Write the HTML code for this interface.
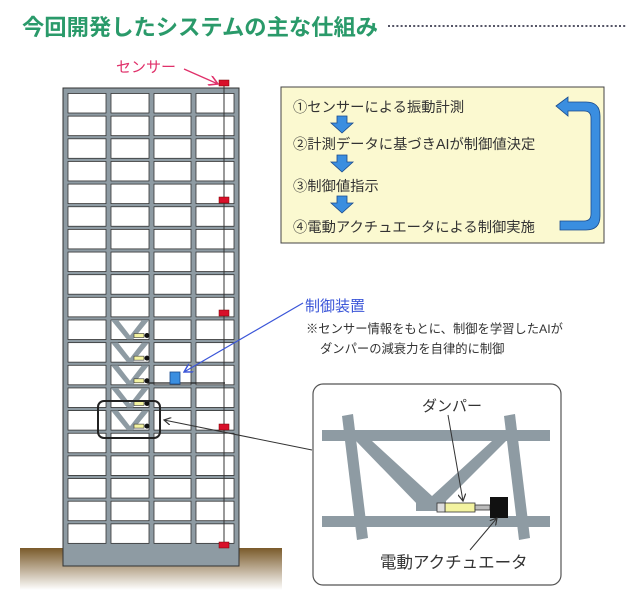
<!DOCTYPE html>
<html><head><meta charset="utf-8"><style>
body{margin:0;background:#fff;width:640px;height:603px;overflow:hidden;font-family:"Liberation Sans","Noto Sans CJK JP",sans-serif}
svg{position:absolute;left:0;top:0}
</style></head><body>
<svg width="640" height="603" viewBox="0 0 640 603" xmlns="http://www.w3.org/2000/svg" font-family="Liberation Sans, Noto Sans CJK JP, sans-serif">
<defs>
<linearGradient id="g" x1="0" y1="0" x2="0" y2="1"><stop offset="0" stop-color="#7a5a2a"/><stop offset="1" stop-color="#fff"/></linearGradient>
<marker id="ab" markerWidth="8" markerHeight="8" refX="7" refY="4" orient="auto"><path d="M0,0 L7,4 L0,8" fill="none" stroke="#3a55d8" stroke-width="1.2"/></marker>
<marker id="ak" markerWidth="8" markerHeight="8" refX="7" refY="4" orient="auto"><path d="M0,0 L7,4 L0,8" fill="none" stroke="#333" stroke-width="1.2"/></marker>
<marker id="ap" markerWidth="8" markerHeight="8" refX="7" refY="4" orient="auto"><path d="M0,0 L7,4 L0,8" fill="none" stroke="#e0306a" stroke-width="1.2"/></marker>
</defs>
<text x="22" y="35" font-size="22.3" font-weight="bold" fill="#2a9a6a">今回開発したシステムの主な仕組み</text>
<line x1="388" y1="26" x2="627" y2="26" stroke="#556" stroke-width="2" stroke-dasharray="2,2.2"/>
<rect x="20" y="548" width="262" height="42" fill="url(#g)"/>
<rect x="63" y="88" width="176" height="478" fill="#8e9ba3" stroke="#333" stroke-width="1"/>
<g fill="#fff" stroke="#333" stroke-width="0.8" id="cells"></g>
<text x="116" y="72" font-size="15" fill="#e0306a">センサー</text>
<line x1="184" y1="69" x2="218" y2="84" stroke="#e0306a" stroke-width="1.3" marker-end="url(#ap)"/>
<rect x="281" y="87" width="323" height="156" fill="#fbf9d0" stroke="#444" stroke-width="1"/>
<g font-size="14.3" fill="#333">
<text x="293" y="112">①センサーによる振動計測</text>
<text x="293" y="149">②計測データに基づきAIが制御値決定</text>
<text x="293" y="191">③制御値指示</text>
<text x="293" y="232">④電動アクチュエータによる制御実施</text>
</g>
<g fill="#3a8ee0" stroke="#1a4a8a" stroke-width="0.8">
<path d="M337,116 h10 v7 h6 l-11,10 l-11,-10 h6z"/>
<path d="M337,155 h10 v7 h6 l-11,10 l-11,-10 h6z"/>
<path d="M337,196 h10 v7 h6 l-11,10 l-11,-10 h6z"/>
<path d="M556,106 l12,-9 v5 h18 q14,0 14,14 v100 q0,14 -14,14 h-26 v-9 h24 q7,0 7,-7 v-96 q0,-7 -7,-7 h-16 v5z"/>
</g>
<text x="305" y="311" font-size="15" fill="#3a55d8">制御装置</text>
<line x1="303" y1="303" x2="184" y2="372" stroke="#3a55d8" stroke-width="1.2" marker-end="url(#ab)"/>
<text x="306" y="333" font-size="12.3" fill="#333">※センサー情報をもとに、制御を学習したAIが</text>
<text x="320" y="353" font-size="12.3" fill="#333">ダンパーの減衰力を自律的に制御</text>
<line x1="147" y1="383" x2="225" y2="383" stroke="#222" stroke-width="1.2"/>
<rect x="170" y="372" width="10" height="12" fill="#3a8ee0" stroke="#1a4a8a" stroke-width="0.8"/>
<rect x="98" y="401" width="62" height="37" rx="6" fill="none" stroke="#222" stroke-width="2"/>
<line x1="312" y1="450" x2="164" y2="420" stroke="#333" stroke-width="1" marker-end="url(#ak)"/>
<rect x="313" y="384" width="248" height="201" rx="10" fill="#fff" stroke="#555" stroke-width="1.2"/>
<g fill="#8e9ba3">
<rect x="322" y="430" width="228" height="11"/>
<rect x="322" y="516" width="228" height="11"/>
<polygon points="342,416 353,414 368,538 357,540"/>
<polygon points="504,416 515,414 530,538 519,540"/>
<polygon points="356,441 372,441 432,496 492,441 506,441 440,507 420,507"/>
<rect x="416" y="496" width="30" height="15"/>
</g>
<rect x="445" y="503" width="30" height="9" fill="#f3f3a0" stroke="#333" stroke-width="0.8"/>
<rect x="437" y="503" width="8" height="9" fill="#ddd" stroke="#333" stroke-width="0.8"/>
<rect x="475" y="505" width="15" height="5" fill="#bbb" stroke="#333" stroke-width="0.8"/>
<rect x="490" y="497" width="18" height="21" fill="#111"/>
<text x="422" y="411" font-size="15" fill="#333">ダンパー</text>
<line x1="448" y1="415" x2="463" y2="501" stroke="#333" stroke-width="1" marker-end="url(#ak)"/>
<text x="380" y="568" font-size="16.5" fill="#333">電動アクチュエータ</text>
<line x1="470" y1="550" x2="497" y2="518" stroke="#333" stroke-width="1" marker-end="url(#ak)"/>
</svg>
<script>
var ns="http://www.w3.org/2000/svg",svg=document.querySelector('svg'),g=document.getElementById('cells');
function el(t,a,p){var e=document.createElementNS(ns,t);for(var k in a)e.setAttribute(k,a[k]);(p||g).appendChild(e);return e;}
var xs=[[68,106],[111,149],[154,191],[196,234]];
for(var r=0;r<20;r++){var y0=93.5+r*22.65,y1=y0+19.5;
 for(var c=0;c<4;c++){el('rect',{x:xs[c][0],y:y0,width:xs[c][1]-xs[c][0],height:y1-y0});}
}
var bg=el('g',{},svg);svg.insertBefore(bg,g.nextSibling);
for(var r=10;r<15;r++){var y0=93.5+r*22.65,y1=y0+19.5;
 el('polygon',{points:"111,"+y0+" 118,"+y0+" 130,"+(y1-4)+" 142,"+y0+" 149,"+y0+" 133,"+y1+" 127,"+y1,fill:"#8e9ba3"},bg);
 el('rect',{x:134,y:y1-6,width:10,height:4,fill:"#f3f3a0",stroke:"#333","stroke-width":0.6},bg);
 el('circle',{cx:147,cy:y1-4,r:2.5,fill:"#111"},bg);
}
el('line',{x1:224,y1:85,x2:224,y2:548,stroke:"#333","stroke-width":1},bg);
[[224,83],[224,200],[224,313],[224,427],[224,545]].forEach(function(p){el('rect',{x:p[0]-5,y:p[1]-3,width:10,height:6,fill:"#d8102a",stroke:"#700","stroke-width":0.5},bg);});
</script>
</body></html>
